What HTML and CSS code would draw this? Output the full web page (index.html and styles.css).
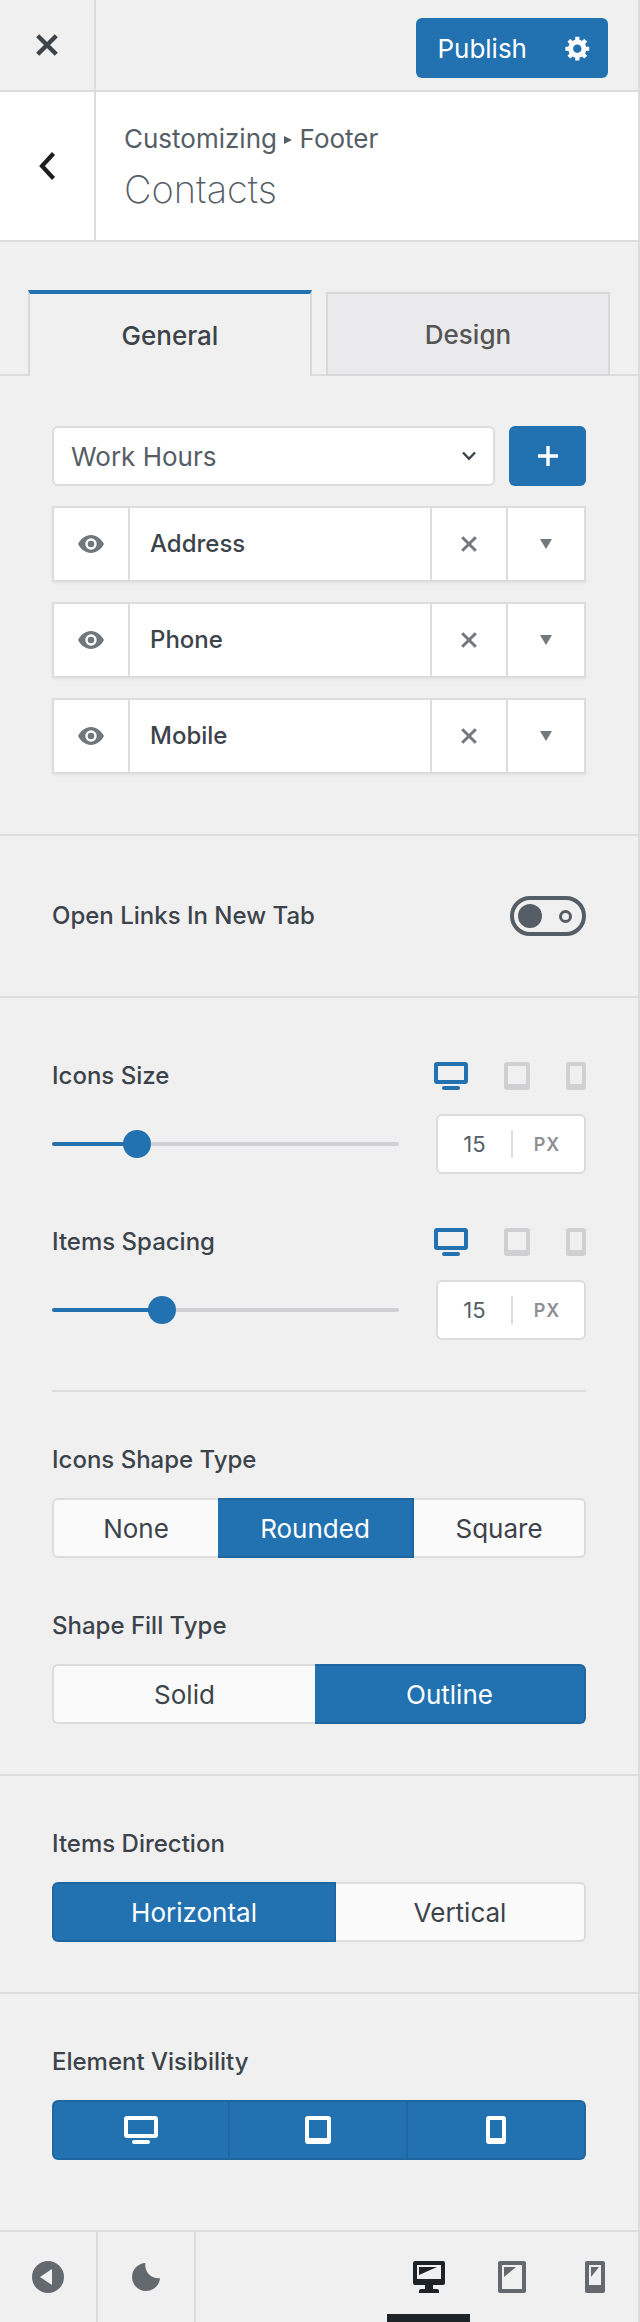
FILE: index.html
```html
<!DOCTYPE html>
<html lang="en">
<head>
  <meta charset="UTF-8">
  <meta name="viewport" content="width=device-width, initial-scale=1.0">
  <title>Customizing Footer Contacts</title>
  <link rel="stylesheet" href="styles.css">
</head>
<body>
  <!-- Shared icons -->
  <svg class="sprite" aria-hidden="true">
    <symbol id="desktop" viewBox="0 0 34 28">
      <path fill="currentColor" fill-rule="evenodd" d="M3 0h28a3 3 0 0 1 3 3v16a3 3 0 0 1-3 3H3a3 3 0 0 1-3-3V3a3 3 0 0 1 3-3zM4 4v14h26V4z"/>
      <rect x="8" y="24" width="18" height="4" rx="2" fill="currentColor"/>
    </symbol>
    <symbol id="tablet" viewBox="0 0 26 28">
      <path fill="currentColor" fill-rule="evenodd" d="M3 0h20a3 3 0 0 1 3 3v22a3 3 0 0 1-3 3H3a3 3 0 0 1-3-3V3a3 3 0 0 1 3-3zM4 4v18h18V4z"/>
    </symbol>
    <symbol id="phone" viewBox="0 0 20 28">
      <path fill="currentColor" fill-rule="evenodd" d="M3 0h14a3 3 0 0 1 3 3v22a3 3 0 0 1-3 3H3a3 3 0 0 1-3-3V3a3 3 0 0 1 3-3zM4 4v18h12V4z"/>
    </symbol>
    <symbol id="eye" viewBox="0 0 26 18">
      <path fill="currentColor" fill-rule="evenodd" d="M0 9C3 3.500 7.500 0 13 0s10 3.500 13 9c-3 5.500-7.500 9-13 9S3 14.500 0 9zM13 3.300a5.700 5.700 0 1 0 0 11.400a5.700 5.700 0 1 0 0-11.400z"/>
      <circle cx="13" cy="9" r="3.300" fill="currentColor"/>
    </symbol>
    <symbol id="remove" viewBox="0 0 16 16">
      <path d="M1.200 1.200l13.600 13.600M14.800 1.200L1.200 14.800" stroke="currentColor" stroke-width="3"/>
    </symbol>
    <symbol id="arrow-down" viewBox="0 0 12 10">
      <path d="M0 0h12L6 10z" fill="currentColor"/>
    </symbol>
  </svg>

  <div class="customizer">
    <header class="topbar">
      <button class="close-btn" type="button" aria-label="Close">
        <svg width="24" height="24" viewBox="0 0 22 22"><path d="M2.500 2.500l17 17M19.500 2.500l-17 17" stroke="currentColor" stroke-width="4"/></svg>
      </button>
      <div class="publish">
        <button class="publish-btn" type="button">Publish</button>
        <button class="publish-settings" type="button" aria-label="Publish settings">
          <svg width="28" height="28" viewBox="0 0 20 20"><path fill="currentColor" d="M18 12h-2.180c-.17.7-.44 1.350-.81 1.930l1.540 1.540-2.100 2.100-1.540-1.540c-.58.36-1.230.63-1.910.79V19H8v-2.180c-.68-.16-1.330-.43-1.910-.79l-1.540 1.540-2.120-2.120 1.540-1.540c-.36-.58-.63-1.230-.79-1.910H1V9.030h2.170c.16-.7.44-1.350.8-1.940L2.430 5.550l2.100-2.100 1.540 1.540c.58-.37 1.240-.64 1.930-.81V2h3v2.180c.68.16 1.330.43 1.910.79l1.540-1.540 2.120 2.120-1.540 1.540c.36.59.64 1.240.8 1.940H18V12zm-8.500 1.500c1.660 0 3-1.340 3-3s-1.340-3-3-3-3 1.340-3 3 1.340 3 3 3z"/></svg>
        </button>
      </div>
    </header>

    <div class="panel-title">
      <button class="back-btn" type="button" aria-label="Back">
        <svg width="18" height="28" viewBox="0 0 18 28"><path d="M15.500 1.500L4 14l11.500 12.500" fill="none" stroke="currentColor" stroke-width="4.200"/></svg>
      </button>
      <div class="panel-heading">
        <div class="breadcrumb">Customizing <svg width="8" height="8" viewBox="0 0 8 8"><path d="M0 0l8 4-8 4z" fill="currentColor"/></svg> Footer</div>
        <h1>Contacts</h1>
      </div>
    </div>

    <div class="tabs" role="tablist">
      <button class="tab active" type="button" role="tab" aria-selected="true">General</button>
      <button class="tab" type="button" role="tab" aria-selected="false">Design</button>
    </div>

    <main>
      <!-- Contact items -->
      <section class="section items-section">
        <div class="add-item">
          <div class="select-wrap">
            <select aria-label="Contact item">
              <option>Work Hours</option>
            </select>
            <svg class="select-arrow" width="14" height="10" viewBox="0 0 14 10"><path d="M1 1.500l6 6.300 6-6.300" fill="none" stroke="currentColor" stroke-width="2.400"/></svg>
          </div>
          <button class="add-btn" type="button" aria-label="Add item">
            <svg width="20" height="20" viewBox="0 0 20 20"><path d="M10 0v20M0 10h20" stroke="currentColor" stroke-width="3.400"/></svg>
          </button>
        </div>
        <ul class="items">
          <li class="item">
            <button type="button" aria-label="Toggle Address"><svg width="26" height="18"><use href="#eye"/></svg></button>
            <span class="item-name">Address</span>
            <button type="button" aria-label="Remove Address"><svg width="16" height="16"><use href="#remove"/></svg></button>
            <button type="button" aria-label="Expand Address"><svg width="12" height="10"><use href="#arrow-down"/></svg></button>
          </li>
          <li class="item">
            <button type="button" aria-label="Toggle Phone"><svg width="26" height="18"><use href="#eye"/></svg></button>
            <span class="item-name">Phone</span>
            <button type="button" aria-label="Remove Phone"><svg width="16" height="16"><use href="#remove"/></svg></button>
            <button type="button" aria-label="Expand Phone"><svg width="12" height="10"><use href="#arrow-down"/></svg></button>
          </li>
          <li class="item">
            <button type="button" aria-label="Toggle Mobile"><svg width="26" height="18"><use href="#eye"/></svg></button>
            <span class="item-name">Mobile</span>
            <button type="button" aria-label="Remove Mobile"><svg width="16" height="16"><use href="#remove"/></svg></button>
            <button type="button" aria-label="Expand Mobile"><svg width="12" height="10"><use href="#arrow-down"/></svg></button>
          </li>
        </ul>
      </section>

      <section class="section switch-section">
        <label class="control-title" for="newTab">Open Links In New Tab</label>
        <input class="switch" type="checkbox" id="newTab">
      </section>

      <!-- Sizes and shapes -->
      <section class="section sizes-section">
        <div class="control">
          <div class="control-head">
            <label class="control-title" for="iconsSize">Icons Size</label>
            <div class="devices">
              <button class="active" type="button" aria-label="Desktop"><svg width="34" height="28"><use href="#desktop"/></svg></button>
              <button type="button" aria-label="Tablet"><svg width="26" height="28"><use href="#tablet"/></svg></button>
              <button type="button" aria-label="Phone"><svg width="20" height="28"><use href="#phone"/></svg></button>
            </div>
          </div>
          <div class="slider-row">
            <input class="slider" type="range" id="iconsSize" min="5" max="50" value="15" style="--fill: 0.22">
            <div class="number-box">
              <input type="number" value="15" aria-label="Icons Size value">
              <button class="unit" type="button">PX</button>
            </div>
          </div>
        </div>

        <div class="control">
          <div class="control-head">
            <label class="control-title" for="itemsSpacing">Items Spacing</label>
            <div class="devices">
              <button class="active" type="button" aria-label="Desktop"><svg width="34" height="28"><use href="#desktop"/></svg></button>
              <button type="button" aria-label="Tablet"><svg width="26" height="28"><use href="#tablet"/></svg></button>
              <button type="button" aria-label="Phone"><svg width="20" height="28"><use href="#phone"/></svg></button>
            </div>
          </div>
          <div class="slider-row">
            <input class="slider" type="range" id="itemsSpacing" min="0" max="50" value="15" style="--fill: 0.3">
            <div class="number-box">
              <input type="number" value="15" aria-label="Items Spacing value">
              <button class="unit" type="button">PX</button>
            </div>
          </div>
        </div>

        <hr>

        <fieldset class="control">
          <legend class="control-title">Icons Shape Type</legend>
          <div class="choices shape-type">
            <label class="choice"><input type="radio" name="shape">None</label>
            <label class="choice"><input type="radio" name="shape" checked>Rounded</label>
            <label class="choice"><input type="radio" name="shape">Square</label>
          </div>
        </fieldset>

        <fieldset class="control">
          <legend class="control-title">Shape Fill Type</legend>
          <div class="choices fill-type">
            <label class="choice"><input type="radio" name="fill">Solid</label>
            <label class="choice"><input type="radio" name="fill" checked>Outline</label>
          </div>
        </fieldset>
      </section>

      <section class="section">
        <fieldset class="control">
          <legend class="control-title">Items Direction</legend>
          <div class="choices direction">
            <label class="choice"><input type="radio" name="direction" checked>Horizontal</label>
            <label class="choice"><input type="radio" name="direction">Vertical</label>
          </div>
        </fieldset>
      </section>

      <section class="section visibility-section">
        <fieldset class="control">
          <legend class="control-title">Element Visibility</legend>
          <div class="choices visibility">
            <label class="choice"><input type="checkbox" aria-label="Desktop" checked><svg width="34" height="28"><use href="#desktop"/></svg></label>
            <label class="choice"><input type="checkbox" aria-label="Tablet" checked><svg width="26" height="28"><use href="#tablet"/></svg></label>
            <label class="choice"><input type="checkbox" aria-label="Phone" checked><svg width="20" height="28"><use href="#phone"/></svg></label>
          </div>
        </fieldset>
      </section>
    </main>

    <footer class="footer">
      <button class="footer-btn" type="button" aria-label="Hide controls">
        <svg width="32" height="32" viewBox="0 0 32 32"><path fill="currentColor" fill-rule="evenodd" d="M16 0a16 16 0 1 0 0 32a16 16 0 1 0 0-32zM20 8v16L8 16z"/></svg>
      </button>
      <button class="footer-btn" type="button" aria-label="Dark mode">
        <svg width="28" height="28" viewBox="0 0 28 28"><path fill="currentColor" d="M13.500 0A14 14 0 1 0 28 15.200A13 13 0 0 1 13.500 0z"/></svg>
      </button>
      <div class="preview-devices">
        <button class="active" type="button" aria-label="Desktop preview">
          <svg width="32" height="32" viewBox="0 0 32 32"><path fill="currentColor" fill-rule="evenodd" d="M2 0h28a2 2 0 0 1 2 2v20a2 2 0 0 1-2 2H20v4h4a2 2 0 0 1 2 2v2H6v-2a2 2 0 0 1 2-2h4v-4H2a2 2 0 0 1-2-2V2a2 2 0 0 1 2-2zM4 4v14h24V4z"/><path fill="currentColor" d="M6 6h18L6 14z"/></svg>
        </button>
        <button type="button" aria-label="Tablet preview">
          <svg width="28" height="32" viewBox="0 0 28 32"><path fill="currentColor" fill-rule="evenodd" d="M2 0h24a2 2 0 0 1 2 2v28a2 2 0 0 1-2 2H2a2 2 0 0 1-2-2V2a2 2 0 0 1 2-2zM4 4v24h20V4z"/><path fill="currentColor" d="M6 6h12L6 16z"/></svg>
        </button>
        <button type="button" aria-label="Phone preview">
          <svg width="20" height="32" viewBox="0 0 20 32"><path fill="currentColor" fill-rule="evenodd" d="M2 0h16a2 2 0 0 1 2 2v28a2 2 0 0 1-2 2H2a2 2 0 0 1-2-2V2a2 2 0 0 1 2-2zM4 4v20h12V4z"/><path fill="currentColor" d="M6 6h8L6 16z"/></svg>
        </button>
      </div>
    </footer>
  </div>
</body>
</html>
```
FILE: styles.css
```css
*,
*::before,
*::after {
  margin: 0;
  padding: 0;
  box-sizing: border-box;
}

:root {
  --blue: #2271b1;
  --blue-dark: #2067a2;
  --line: #dcdcdc;
  --text: #3c434a;
  --muted: #555d66;
}

body {
  font-family: Inter, "Noto Sans", sans-serif;
  font-size: 26px;
  background: #f0f0f0;
  color: var(--text);
}

button,
input,
select {
  font: inherit;
  color: inherit;
  border: none;
  background: none;
}

button {
  display: flex;
  align-items: center;
  justify-content: center;
  cursor: pointer;
}

svg {
  display: block;
}

.sprite {
  position: absolute;
  width: 0;
  height: 0;
}

.customizer {
  min-height: 100vh;
  display: flex;
  flex-direction: column;
  border-right: 2px solid var(--line);
}

/* Top bar */
.topbar {
  display: flex;
  justify-content: space-between;
  border-bottom: 2px solid var(--line);
}

.close-btn,
.back-btn {
  width: 96px;
  border-right: 2px solid var(--line);
}

.publish {
  display: flex;
  height: 60px;
  margin: 18px 30px 12px;
  border-radius: 6px;
  background: var(--blue);
  color: #fff;
}

.publish-btn {
  padding: 0 21px;
}

.publish-settings {
  width: 60px;
}

/* Panel title */
.panel-title {
  display: flex;
  background: #fff;
  border-bottom: 2px solid var(--line);
}

.back-btn {
  color: #1e1e1e;
}

.panel-heading {
  padding: 29px 28px 25px;
  color: var(--muted);
}

.breadcrumb {
  line-height: 36px;
}

.breadcrumb svg {
  display: inline-block;
  vertical-align: 4px;
}

h1 {
  margin-top: 6px;
  font-size: 38px;
  font-weight: 200;
  line-height: 52px;
}

/* Tabs */
.tabs {
  display: flex;
  align-items: flex-end;
  gap: 14px;
  padding: 48px 28px 0;
  box-shadow: inset 0 -2px var(--line);
}

.tab {
  flex: 1;
  height: 84px;
  border: 2px solid #d8d8d8;
  background: #eaeaec;
  color: #555;
  font-weight: 500;
}

.tab.active {
  height: 86px;
  border-top: 4px solid var(--blue);
  border-bottom: none;
  background: #f0f0f0;
  color: var(--text);
}

/* Sections */
.section {
  padding: 54px 52px 50px;
  border-bottom: 2px solid var(--line);
}

.items-section {
  padding: 50px 52px 60px;
}

.add-item {
  display: flex;
  gap: 14px;
  height: 60px;
}

.select-wrap {
  position: relative;
  flex: 1;
}

select {
  appearance: none;
  width: 100%;
  height: 100%;
  padding: 0 48px 0 17px;
  border: 2px solid var(--line);
  border-radius: 6px;
  background: #fff;
  color: var(--muted);
}

.select-arrow {
  position: absolute;
  top: 25px;
  right: 19px;
  color: var(--text);
  pointer-events: none;
}

.add-btn {
  width: 77px;
  border-radius: 6px;
  background: var(--blue);
  color: #fff;
}

.items {
  display: grid;
  gap: 20px;
  margin-top: 20px;
  list-style: none;
}

.item {
  display: flex;
  height: 76px;
  border: 2px solid var(--line);
  background: #fff;
  box-shadow: 0 2px 2px rgba(0, 0, 0, 0.04);
}

.item button {
  width: 76px;
  border-left: 2px solid var(--line);
  color: #72777c;
}

.item button:first-child {
  border-left: none;
  border-right: 2px solid var(--line);
}

.item button:last-child {
  width: 78px;
}

.item-name {
  flex: 1;
  padding-left: 20px;
  font-size: 24px;
  font-weight: 500;
  line-height: 72px;
}

.switch-section {
  display: flex;
  align-items: center;
  justify-content: space-between;
  padding: 60px 52px;
}

.control-title {
  font-size: 24px;
  font-weight: 500;
  line-height: 28px;
}

.switch {
  appearance: none;
  display: flex;
  align-items: center;
  justify-content: space-between;
  width: 76px;
  height: 40px;
  padding: 0 10px 0 4px;
  border: 4px solid var(--muted);
  border-radius: 20px;
}

.switch::before {
  content: "";
  width: 24px;
  height: 24px;
  border-radius: 50%;
  background: var(--muted);
}

.switch::after {
  content: "";
  width: 13px;
  height: 13px;
  border: 3px solid var(--muted);
  border-radius: 50%;
}

.sizes-section {
  padding-top: 64px;
}

fieldset {
  border: none;
  min-width: 0;
}

.control + .control {
  margin-top: 54px;
}

.control-head {
  display: flex;
  align-items: center;
  justify-content: space-between;
}

.devices {
  display: flex;
  gap: 36px;
}

.devices button {
  color: #d0d0d2;
}

.devices .active {
  color: var(--blue);
}

.slider-row {
  display: flex;
  align-items: center;
  gap: 37px;
  margin-top: 24px;
}

.slider {
  appearance: none;
  flex: 1;
  min-width: 0;
  height: 28px;
}

.slider::-webkit-slider-runnable-track {
  height: 4px;
  border-radius: 2px;
  background: linear-gradient(to right, var(--blue) calc(14px + (100% - 28px) * var(--fill)), #d0d0d4 0);
}

.slider::-webkit-slider-thumb {
  appearance: none;
  width: 28px;
  height: 28px;
  margin-top: -12px;
  border-radius: 50%;
  background: var(--blue);
}

.number-box {
  display: flex;
  align-items: center;
  width: 150px;
  height: 60px;
  border: 2px solid var(--line);
  border-radius: 6px;
  background: #fff;
}

.number-box input {
  appearance: textfield;
  flex: 1;
  min-width: 0;
  height: 28px;
  border-right: 2px solid var(--line);
  color: var(--muted);
  font-size: 22px;
  text-align: center;
}

.number-box input::-webkit-inner-spin-button {
  appearance: none;
}

.unit {
  width: 71px;
  padding-right: 3px;
  color: #8c8f94;
  font-size: 18px;
  font-weight: 600;
  letter-spacing: 1px;
}

hr {
  margin: 50px 0 54px;
  border: none;
  border-top: 2px solid var(--line);
}

/* Button groups */
.choices {
  display: grid;
  height: 60px;
  margin-top: 24px;
}

.shape-type { grid-template-columns: 166fr 196fr 172fr; }
.fill-type { grid-template-columns: 263fr 271fr; }
.direction { grid-template-columns: 284fr 250fr; }
.visibility { grid-template-columns: repeat(3, 1fr); }

.choice {
  position: relative;
  display: flex;
  align-items: center;
  justify-content: center;
  border: 2px solid var(--line);
  background: #fafafa;
  cursor: pointer;
}

.choice:first-child {
  border-radius: 6px 0 0 6px;
}

.choice:last-child {
  border-radius: 0 6px 6px 0;
}

.choice + .choice {
  border-left: none;
}

.choice:not(:last-child):not(:has(input:checked)) {
  border-right: none;
}

.choice input {
  appearance: none;
  position: absolute;
  inset: 0;
  cursor: pointer;
}

.choice:has(input:checked) {
  border-color: var(--blue-dark);
  background: var(--blue);
  color: #fff;
}

.visibility-section {
  padding-bottom: 70px;
}

/* Footer */
.footer {
  display: flex;
  height: 90px;
  margin-top: auto;
  color: #646970;
}

.footer-btn {
  width: 98px;
  border-right: 2px solid var(--line);
}

.preview-devices {
  display: flex;
  flex: 1;
  justify-content: flex-end;
  padding-right: 2px;
}

.preview-devices button {
  width: 83px;
  padding-top: 8px;
  border-bottom: 8px solid transparent;
}

.preview-devices .active {
  border-color: #1d2327;
  color: #1d2327;
}
```
